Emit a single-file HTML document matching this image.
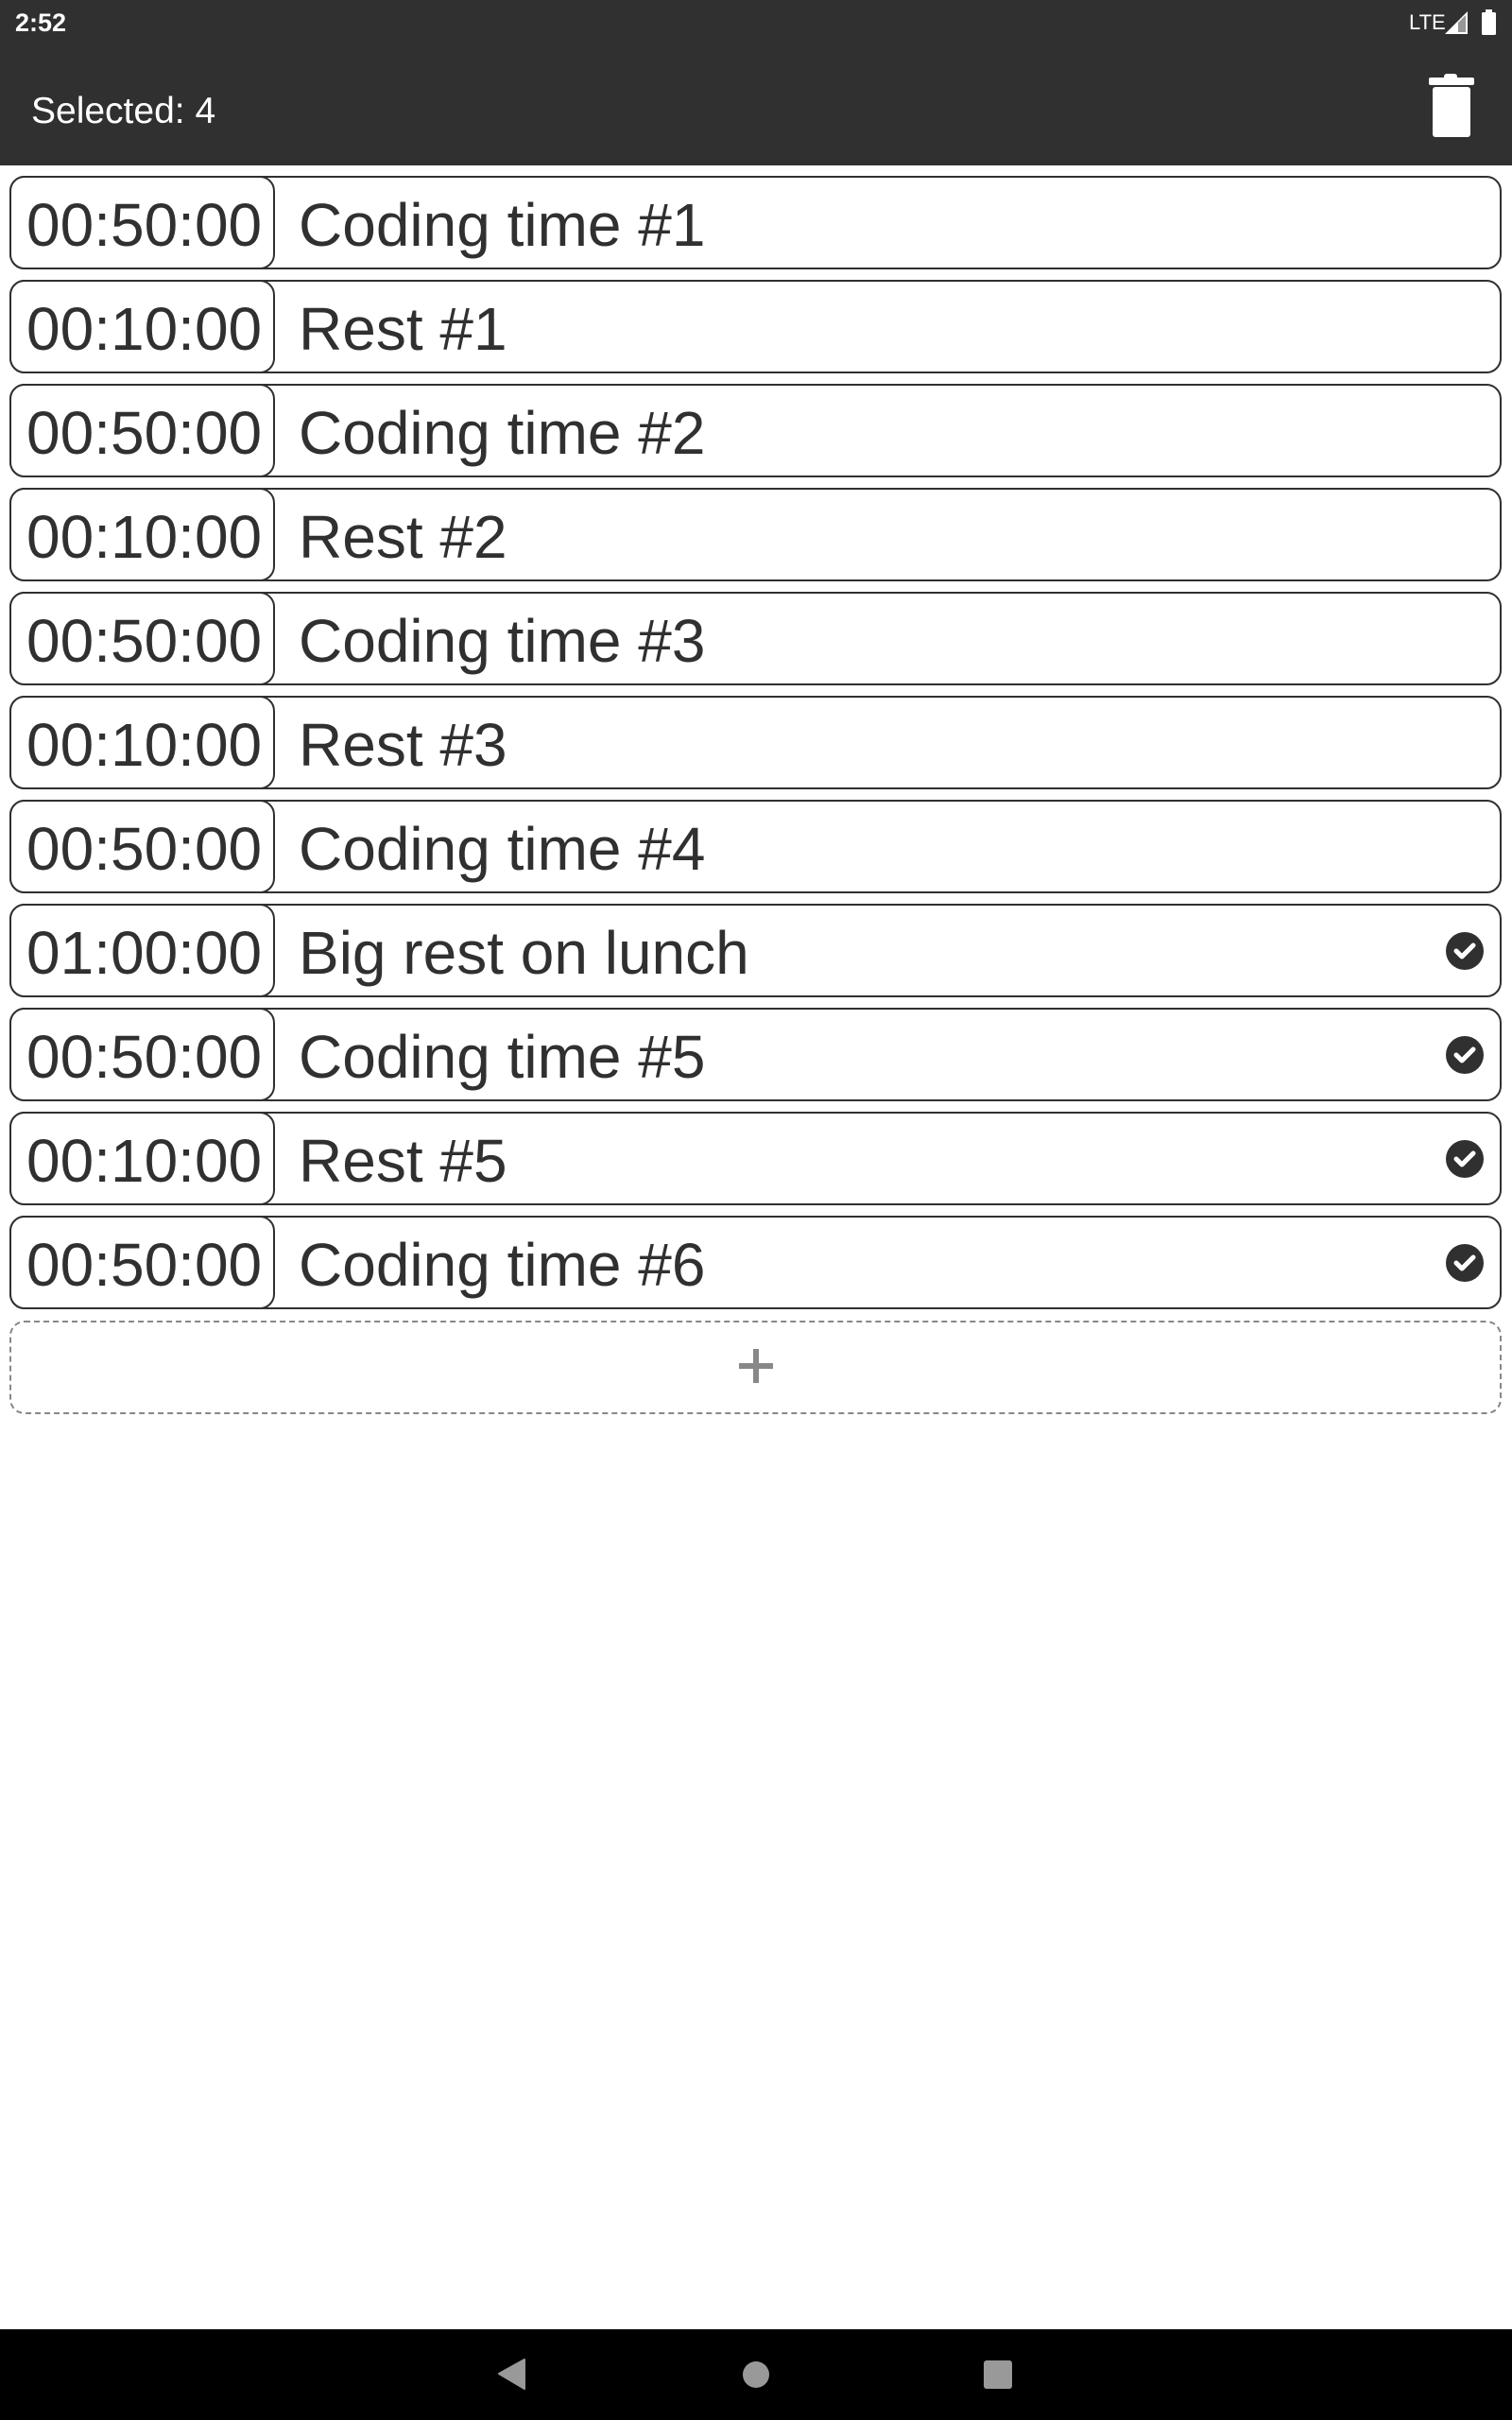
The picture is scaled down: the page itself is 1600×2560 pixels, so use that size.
<!DOCTYPE html>
<html><head><meta charset="utf-8"><style>
*{margin:0;padding:0;box-sizing:border-box}
body{width:1600px;height:2560px;background:#fff;position:relative;overflow:hidden;font-family:"Liberation Sans",sans-serif;color:#303030}
.top{position:absolute;left:0;top:0;width:1600px;height:175px;background:#303030}
.t{position:absolute;white-space:nowrap;line-height:1}
.row{position:absolute;left:10px;width:1579px;height:99px;border:2.5px solid #303030;border-radius:16px}
.tb{position:absolute;left:-2.5px;top:-2.5px;width:281px;height:99px;border:2.5px solid #303030;border-radius:16px;background:#fff}
.row .t{font-size:64px;top:18px;color:#303030}
.chk{position:absolute;left:1518px;top:28px;width:40px;height:40px}
.add{position:absolute;left:10px;top:1397px;width:1579px;height:99px;border:2.5px dashed #888;border-radius:16px}
.nav{position:absolute;left:0;top:2464px;width:1600px;height:96px;background:#000}
</style></head><body>
<div class="top"></div>
<div class="t" style="left:16px;top:11px;font-size:27px;color:#fff;font-weight:bold">2:52</div>
<div class="t" style="left:1491px;top:13px;font-size:22px;color:#fff">LTE</div>
<svg style="position:absolute;left:1527px;top:11px" width="28" height="26"><path d="M2 25 L26 1 L26 25 Z" fill="#fff"/><path d="M16 13 L24 5 L24 23 L16 23Z" fill="#303030" opacity="0.5"/></svg>
<svg style="position:absolute;left:1567px;top:10px" width="18" height="28"><rect x="5" y="0" width="7" height="4" fill="#fff"/><rect x="1" y="3" width="15" height="24" rx="1.5" fill="#fff"/></svg>
<div class="t" style="left:33px;top:98px;font-size:39px;color:#fff">Selected: 4</div>
<svg style="position:absolute;left:1510px;top:76px" width="52" height="72"><rect x="18" y="2" width="14" height="6" rx="3" fill="#fff"/><rect x="2" y="6" width="48" height="8" rx="2" fill="#fff"/><rect x="6" y="16" width="40" height="53" rx="3" fill="#fff"/></svg>

<div class="row" style="top:186px"><div class="tb"></div><div class="t" style="left:16px">00:50:00</div><div class="t" style="left:304px">Coding time #1</div></div>
<div class="row" style="top:296px"><div class="tb"></div><div class="t" style="left:16px">00:10:00</div><div class="t" style="left:304px">Rest #1</div></div>
<div class="row" style="top:406px"><div class="tb"></div><div class="t" style="left:16px">00:50:00</div><div class="t" style="left:304px">Coding time #2</div></div>
<div class="row" style="top:516px"><div class="tb"></div><div class="t" style="left:16px">00:10:00</div><div class="t" style="left:304px">Rest #2</div></div>
<div class="row" style="top:626px"><div class="tb"></div><div class="t" style="left:16px">00:50:00</div><div class="t" style="left:304px">Coding time #3</div></div>
<div class="row" style="top:736px"><div class="tb"></div><div class="t" style="left:16px">00:10:00</div><div class="t" style="left:304px">Rest #3</div></div>
<div class="row" style="top:846px"><div class="tb"></div><div class="t" style="left:16px">00:50:00</div><div class="t" style="left:304px">Coding time #4</div></div>
<div class="row" style="top:956px"><div class="tb"></div><div class="t" style="left:16px">01:00:00</div><div class="t" style="left:304px">Big rest on lunch</div><svg class="chk" viewBox="0 0 40 40"><circle cx="20" cy="20" r="20" fill="#303030"/><path d="M11 20 L17 26 L29 14" stroke="#fff" stroke-width="5" fill="none" stroke-linecap="round" stroke-linejoin="round"/></svg></div>
<div class="row" style="top:1066px"><div class="tb"></div><div class="t" style="left:16px">00:50:00</div><div class="t" style="left:304px">Coding time #5</div><svg class="chk" viewBox="0 0 40 40"><circle cx="20" cy="20" r="20" fill="#303030"/><path d="M11 20 L17 26 L29 14" stroke="#fff" stroke-width="5" fill="none" stroke-linecap="round" stroke-linejoin="round"/></svg></div>
<div class="row" style="top:1176px"><div class="tb"></div><div class="t" style="left:16px">00:10:00</div><div class="t" style="left:304px">Rest #5</div><svg class="chk" viewBox="0 0 40 40"><circle cx="20" cy="20" r="20" fill="#303030"/><path d="M11 20 L17 26 L29 14" stroke="#fff" stroke-width="5" fill="none" stroke-linecap="round" stroke-linejoin="round"/></svg></div>
<div class="row" style="top:1286px"><div class="tb"></div><div class="t" style="left:16px">00:50:00</div><div class="t" style="left:304px">Coding time #6</div><svg class="chk" viewBox="0 0 40 40"><circle cx="20" cy="20" r="20" fill="#303030"/><path d="M11 20 L17 26 L29 14" stroke="#fff" stroke-width="5" fill="none" stroke-linecap="round" stroke-linejoin="round"/></svg></div>
<div class="add"></div>
<svg style="position:absolute;left:780px;top:1425px" width="40" height="40"><rect x="2" y="17" width="36" height="6" fill="#888"/><rect x="17" y="2" width="6" height="36" fill="#888"/></svg>

<div class="nav"></div>
<svg style="position:absolute;left:526px;top:2495px" width="32" height="34"><path d="M29 1 L2 16 L29 32 Z" fill="#999" stroke="#999" stroke-width="2" stroke-linejoin="round"/></svg>
<div style="position:absolute;left:786px;top:2498px;width:28px;height:28px;border-radius:50%;background:#999"></div>
<div style="position:absolute;left:1041px;top:2497px;width:30px;height:30px;border-radius:3px;background:#999"></div>
</body></html>
